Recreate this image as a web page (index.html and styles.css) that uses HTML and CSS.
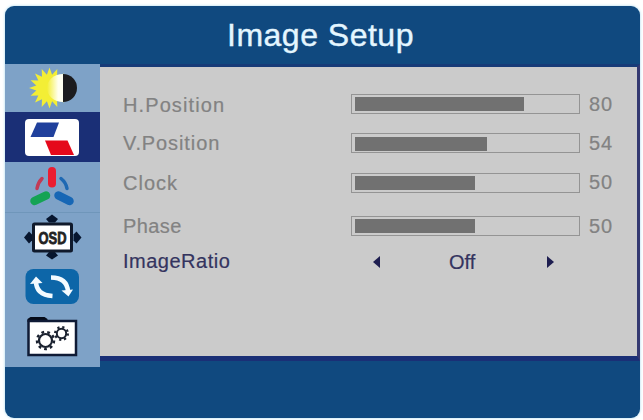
FILE: index.html
```html
<!DOCTYPE html>
<html lang="en">
<head>
    <meta charset="UTF-8">
    <meta name="viewport" content="width=device-width, initial-scale=1.0">
    <title>Image Setup</title>
    <link rel="stylesheet" href="styles.css">
</head>
<body>

<div class="osd">
    <div class="header">Image Setup</div>

    <div class="main">
        <div class="sidebar">
            <!-- brightness / contrast -->
            <div class="tab">
                <svg viewBox="5 64 95 48" width="95" height="48">
                    <defs>
                        <linearGradient id="glow">
                            <stop offset="0" stop-color="#f3ee35"/>
                            <stop offset="0.7" stop-color="#fffff0"/>
                        </linearGradient>
                    </defs>
                    <polygon id="sun" fill="#f3ee35"/>
                    <path d="M63 74a16 14 0 0 0 0 28z" fill="url(#glow)"/>
                    <path d="M63 74a14 14 0 0 1 0 28z" fill="#1c1c1e"/>
                </svg>
            </div>
            <!-- image position -->
            <div class="tab active">
                <svg viewBox="5 112 95 50" width="95" height="50">
                    <rect x="25" y="119" width="54" height="37" rx="4" fill="#fff"/>
                    <path d="M37 122.5h22l-5.500 14.500h-23z" fill="#20409c"/>
                    <path d="M45 140.500h22.500l6.500 14.500h-23z" fill="#e5091b"/>
                </svg>
            </div>
            <!-- colour -->
            <div class="tab divider">
                <svg viewBox="5 162 95 51" width="95" height="51" fill="none" stroke-linecap="round">
                    <path d="M52 171v12.500" stroke="#ea1d32" stroke-width="8"/>
                    <path d="M34.500 201l11.500-5.500" stroke="#14a354" stroke-width="8.500"/>
                    <path d="M58.500 195.500l11 5.500" stroke="#1767b5" stroke-width="8.500"/>
                    <path d="M37 188.500q1-6 5-10" stroke="#c23a55" stroke-width="3.500"/>
                    <path d="M61 178.500q5 4 6 10" stroke="#1e69b3" stroke-width="3.500"/>
                </svg>
            </div>
            <!-- osd position -->
            <div class="tab">
                <svg viewBox="5 213 95 49" width="95" height="49">
                    <g fill="#07162f">
                        <path d="M52 214.500l6 4.500-3 3.500h-6l-3-3.500z"/>
                        <path d="M52 259.500l6-4-3-3.500h-6l-3 3.500z"/>
                        <path d="M24 237.500l5-6 3 3v6l-3 3z"/>
                        <path d="M81.500 237.500l-5-6-3 3v6l3 3z"/>
                    </g>
                    <rect x="33.500" y="224" width="38" height="27" rx="1" fill="#fff" stroke="#101a2c" stroke-width="3"/>
                    <text class="osd-text" x="38.500" y="243.500" textLength="28" lengthAdjust="spacingAndGlyphs">OSD</text>
                </svg>
            </div>
            <!-- reset -->
            <div class="tab">
                <svg viewBox="5 262 95 49" width="95" height="49">
                    <rect x="25.500" y="269" width="53.500" height="35" rx="8" fill="#0d66a8"/>
                    <g fill="none" stroke="#f4fbff" stroke-width="4.500">
                        <path d="M36 281q0 14 16.500 15"/>
                        <path d="M51 277.500q16 0 17 14"/>
                    </g>
                    <g fill="#f4fbff">
                        <path d="M36 276.500l6.500 6.500-12.500 1z"/>
                        <path d="M68.500 296.500l-7-6 11.500-1z"/>
                    </g>
                </svg>
            </div>
            <!-- misc -->
            <div class="tab last">
                <svg viewBox="5 311 95 56" width="95" height="56">
                    <path d="M27.500 322v-3l3-2h14l3 2v3z" fill="#050b18"/>
                    <rect x="28.500" y="321" width="47.500" height="34" fill="#fff" stroke="#0e1a35" stroke-width="2.500"/>
                    <g fill="none" stroke="#1b2230">
                        <circle cx="45.500" cy="340.500" r="6.500" stroke-width="2.200"/>
                        <circle cx="45.500" cy="340.500" r="8.500" stroke-width="2.500" stroke-dasharray="2.800 3.134"/>
                        <circle cx="61.500" cy="333.500" r="4.700" stroke-width="2"/>
                        <circle cx="61.500" cy="333.500" r="6.400" stroke-width="2.200" stroke-dasharray="2.200 2.827"/>
                    </g>
                </svg>
            </div>
        </div>

        <div class="content">
            <div class="row">
                <span class="label h-pos">H.Position</span>
                <div class="bar"><div class="fill" style="width: 76%"></div></div>
                <span class="value">80</span>
            </div>
            <div class="row">
                <span class="label v-pos">V.Position</span>
                <div class="bar low"><div class="fill" style="width: 59%"></div></div>
                <span class="value">54</span>
            </div>
            <div class="row">
                <span class="label clock">Clock</span>
                <div class="bar"><div class="fill" style="width: 54%"></div></div>
                <span class="value">50</span>
            </div>
            <div class="row">
                <span class="label phase">Phase</span>
                <div class="bar"><div class="fill" style="width: 54%"></div></div>
                <span class="value">50</span>
            </div>
            <div class="row selected">
                <span class="label ratio">ImageRatio</span>
                <div class="picker">
                    <svg viewBox="0 0 8 12" width="8" height="12"><path d="M7 0v12L0 6z" fill="#1e1e50"/></svg>
                    <span>Off</span>
                    <svg viewBox="0 0 8 12" width="8" height="12"><path d="M1 0v12l7-6z" fill="#1e1e50"/></svg>
                </div>
            </div>
        </div>
    </div>
</div>

<script>
// sun rays
const points = [];
for (let i = 0; i < 32; i++) {
    const r = i % 2 ? 13.5 : 20.5;
    const a = i * Math.PI / 16;
    points.push((49.5 + r * Math.cos(a)).toFixed(1) + ',' + (88 + r * Math.sin(a)).toFixed(1));
}
document.getElementById('sun').setAttribute('points', points.join(' '));
</script>

</body>
</html>
```
FILE: styles.css
```css
body {
    margin: 0;
    padding: 6px 3px 2px 5px;
    background: #fff;
    font-family: "Liberation Sans", Arial, sans-serif;
}
.osd {
    box-sizing: border-box;
    width: 635px;
    height: 412px;
    background: #10497f;
    border-radius: 9px;
    box-shadow: 0 0 3px #a5d8ef;
    overflow: hidden;
}
.header {
    box-sizing: border-box;
    height: 58px;
    padding: 11px 0 0 222px;
    color: #e4f6ff;
    font-size: 32px;
    line-height: 36px;
    letter-spacing: 0.5px;
    white-space: nowrap;
    -webkit-text-stroke: 0.4px #e4f6ff;
}
.main {
    display: flex;
    height: 303px;
}
.sidebar {
    width: 95px;
    background: #7ea2c7;
}
.tab {
    box-sizing: border-box;
}
.tab svg {
    display: block;
}
.active {
    background: #1a2f76;
}
.divider {
    border-bottom: 1px solid #6f96ba;
    height: 51px;
}
.osd-text {
    font-family: "Liberation Sans", Arial, sans-serif;
    font-size: 17px;
    font-weight: bold;
    fill: #222;
    stroke: #222;
    stroke-width: 0.8px;
}
.content {
    box-sizing: border-box;
    display: grid;
    grid-template-rows: 40px 38px 41px 46px 26px;
    width: 540px;
    height: 297px;
    padding: 17px 0 0 23px;
    background: #cbcbcb;
    border-top: 3px solid #173b78;
    border-right: 3px solid #343971;
    border-bottom: 5px solid #1a2f76;
}
.row {
    display: grid;
    grid-template-columns: 228px 229px 1fr;
    align-items: center;
    color: #828282;
    -webkit-text-stroke: 0.2px;
}
.label {
    font-size: 20px;
    line-height: 22px;
}
.h-pos {
    letter-spacing: 1.1px;
    padding-top: 1px;
}
.v-pos {
    letter-spacing: 0.9px;
    padding-bottom: 1px;
}
.clock {
    letter-spacing: 1px;
    padding-top: 1px;
}
.phase {
    letter-spacing: 0.4px;
}
.ratio {
    letter-spacing: 0.5px;
    padding-bottom: 2px;
}
.bar {
    box-sizing: border-box;
    height: 20px;
    padding: 2px;
    border: 1px solid #949494;
}
.low {
    padding-top: 3px;
}
.fill {
    height: 14px;
    margin-left: 1px;
    background: #717171;
}
.value {
    padding-left: 9px;
    font-size: 20px;
    letter-spacing: 1px;
}
.selected {
    color: #34345f;
}
.picker {
    display: grid;
    grid-template-columns: 76px 97px 8px;
    align-items: center;
    padding-left: 22px;
    font-size: 20px;
}
```
